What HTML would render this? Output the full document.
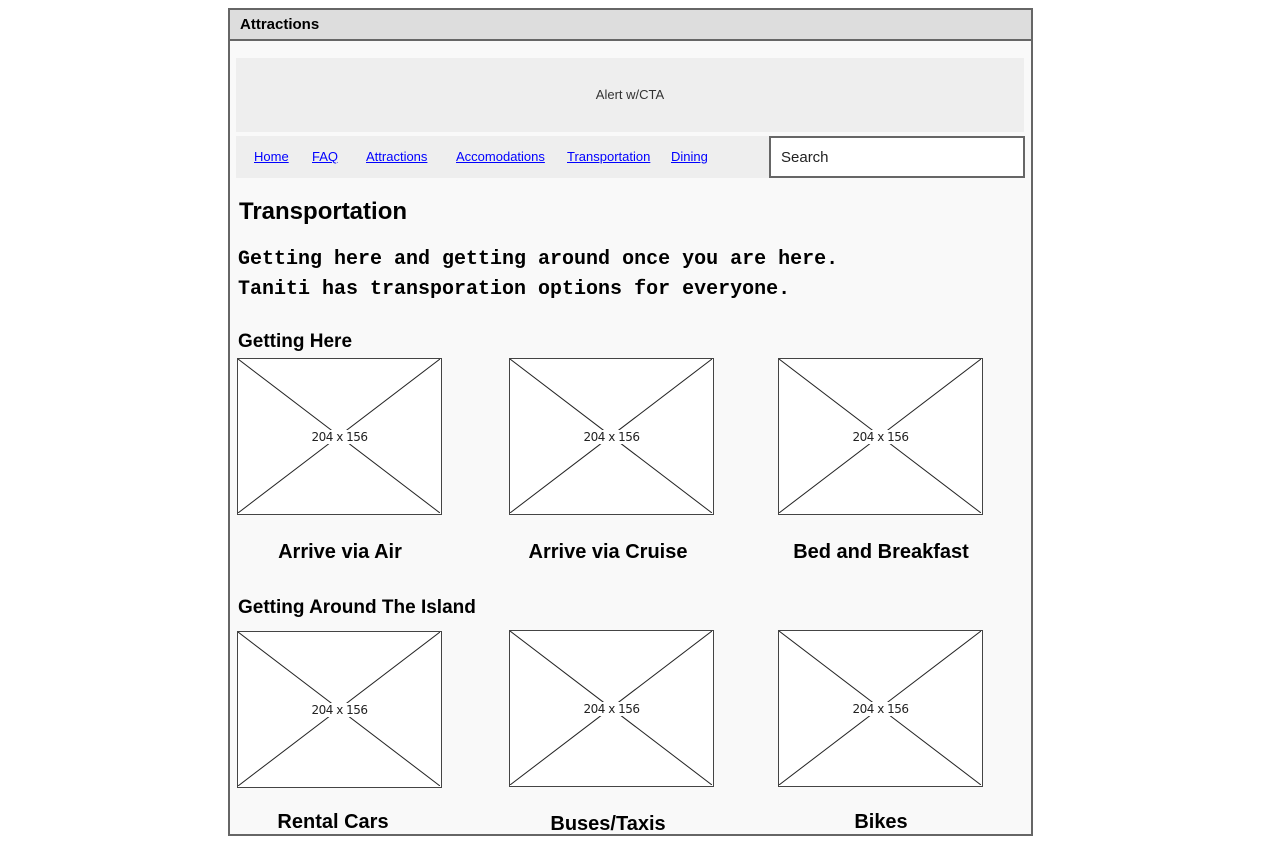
<!DOCTYPE html>
<html><head><meta charset="utf-8"><style>
*{margin:0;padding:0;box-sizing:border-box}
body{width:1279px;height:857px;background:#fff;font-family:"Liberation Sans",Arial,sans-serif;position:relative;overflow:hidden}
.a{position:absolute}
.frame{left:228px;top:8px;width:805px;height:828px;border:2px solid #666;background:#f9f9f9}
.title{left:228px;top:8px;width:805px;height:33px;border:2px solid #666;background:#ddd;font-weight:bold;font-size:15px;line-height:30px;padding-left:10px;color:#000}
.nav a{position:absolute;top:149px;font-size:13px;color:#00f;text-decoration:underline}
.img{position:absolute;width:205px;height:157px;border:1.5px solid #444;background:#fff}
.img svg{position:absolute;left:0;top:0}
.img span{position:absolute;left:0;right:0;top:71px;text-align:center;font-size:12px;color:#222;font-family:"DejaVu Sans",sans-serif;letter-spacing:-0.5px}
.cap{position:absolute;font-weight:bold;font-size:20px;text-align:center;width:260px;color:#000}
.h3{position:absolute;font-weight:bold;font-size:19px;left:238px;color:#000}
</style></head><body>
<div class="a frame"></div>
<div class="a title">Attractions</div>
<div class="a" style="left:236px;top:58px;width:788px;height:74px;background:#eee;text-align:center;font-size:13px;line-height:74px;color:#333">Alert w/CTA</div>
<div class="a" style="left:236px;top:136px;width:533px;height:42px;background:#eee"></div>
<div class="nav"><a style="left:254px">Home</a><a style="left:312px">FAQ</a><a style="left:366px">Attractions</a><a style="left:456px">Accomodations</a><a style="left:567px">Transportation</a><a style="left:671px">Dining</a></div>
<div class="a" style="left:769px;top:136px;width:256px;height:42px;background:#fff;border:2px solid #666;font-size:15px;line-height:40px;padding-left:10px;color:#222">Search</div>
<div class="a" style="left:239px;top:198px;font-size:24px;font-weight:bold;color:#000">Transportation</div>
<div class="a" style="left:238px;top:245px;font-family:'Liberation Mono',monospace;font-weight:bold;font-size:20px;line-height:30px;color:#000;white-space:pre">Getting here and getting around once you are here.
Taniti has transporation options for everyone.</div>
<div class="h3" style="top:331px">Getting Here</div>
<div class="h3" style="top:597px">Getting Around The Island</div>

<div class="img" style="left:237px;top:358px"><svg width="202" height="154"><line x1="0" y1="0" x2="202" y2="154" stroke="#222"/><line x1="202" y1="0" x2="0" y2="154" stroke="#222"/></svg><span><b style="font-weight:normal;background:#fff;padding:0 2px">204 x 156</b></span></div>
<div class="img" style="left:509px;top:358px"><svg width="202" height="154"><line x1="0" y1="0" x2="202" y2="154" stroke="#222"/><line x1="202" y1="0" x2="0" y2="154" stroke="#222"/></svg><span><b style="font-weight:normal;background:#fff;padding:0 2px">204 x 156</b></span></div>
<div class="img" style="left:778px;top:358px"><svg width="202" height="154"><line x1="0" y1="0" x2="202" y2="154" stroke="#222"/><line x1="202" y1="0" x2="0" y2="154" stroke="#222"/></svg><span><b style="font-weight:normal;background:#fff;padding:0 2px">204 x 156</b></span></div>
<div class="img" style="left:237px;top:631px"><svg width="202" height="154"><line x1="0" y1="0" x2="202" y2="154" stroke="#222"/><line x1="202" y1="0" x2="0" y2="154" stroke="#222"/></svg><span><b style="font-weight:normal;background:#fff;padding:0 2px">204 x 156</b></span></div>
<div class="img" style="left:509px;top:630px"><svg width="202" height="154"><line x1="0" y1="0" x2="202" y2="154" stroke="#222"/><line x1="202" y1="0" x2="0" y2="154" stroke="#222"/></svg><span><b style="font-weight:normal;background:#fff;padding:0 2px">204 x 156</b></span></div>
<div class="img" style="left:778px;top:630px"><svg width="202" height="154"><line x1="0" y1="0" x2="202" y2="154" stroke="#222"/><line x1="202" y1="0" x2="0" y2="154" stroke="#222"/></svg><span><b style="font-weight:normal;background:#fff;padding:0 2px">204 x 156</b></span></div>

<div class="cap" style="left:210px;top:541px">Arrive via Air</div>
<div class="cap" style="left:478px;top:541px">Arrive via Cruise</div>
<div class="cap" style="left:751px;top:541px">Bed and Breakfast</div>
<div class="cap" style="left:203px;top:811px">Rental Cars</div>
<div class="cap" style="left:478px;top:813px">Buses/Taxis</div>
<div class="cap" style="left:751px;top:811px">Bikes</div>
</body></html>
